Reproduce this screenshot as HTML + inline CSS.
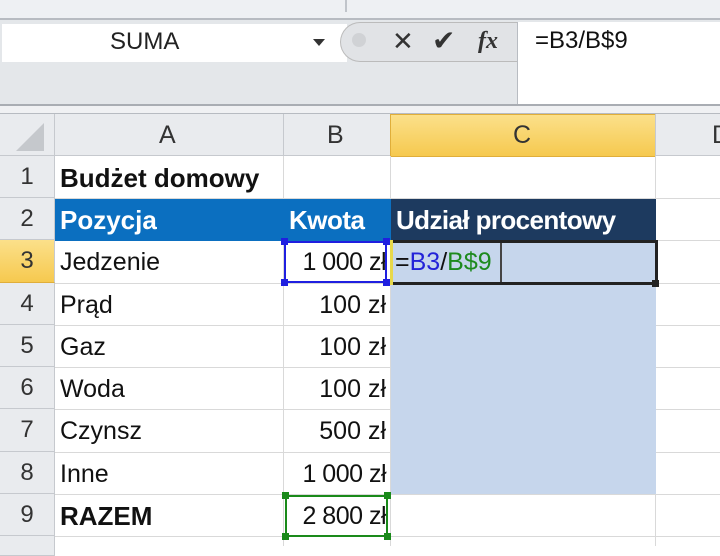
<!DOCTYPE html>
<html><head><meta charset="utf-8"><style>
body{margin:0;width:720px;height:546px;overflow:hidden;background:#fff;font-family:"Liberation Sans",sans-serif;position:relative}
div{position:absolute;box-sizing:border-box}
.t{font-size:25px;line-height:42px;white-space:nowrap}
.rh{left:0;width:55px;background:#e9ebee;border-right:1px solid #c6c9ce;border-bottom:1px solid #c6c9ce;text-align:center;color:#333;font-size:24px;line-height:42px}
.hl{height:1px;background:#d9d9d9;left:55px;width:665px}
.vl{width:1px;background:#d9d9d9;top:156px;height:390px}
</style></head><body>
<div style="left:0;top:0;width:720px;height:20px;background:#eef0f3;border-bottom:2px solid #b7bbc1"></div>
<div style="left:345px;top:0;width:2px;height:12px;background:#c0c4ca"></div>
<div style="left:0;top:20px;width:720px;height:92px;background:#e4e7ea"></div>
<div style="left:2px;top:24px;width:345px;height:38px;background:#fff"></div>
<div class="t" style="left:110px;top:22px;font-size:24px;line-height:40px;color:#222">SUMA</div>
<div style="left:313px;top:39px;width:0;height:0;border-left:6px solid transparent;border-right:6px solid transparent;border-top:7px solid #333"></div>
<div style="left:340px;top:22px;width:180px;height:40px;background:#e1e3e6;border:1px solid #bbb;border-radius:20px 0 0 20px;border-right:none"></div>
<div style="left:352px;top:33px;width:14px;height:14px;border-radius:7px;background:#d0d2d5"></div>
<div class="t" style="left:392px;top:20px;font-size:26px;line-height:42px;color:#333">✕</div>
<div class="t" style="left:432px;top:20px;font-size:28px;line-height:42px;color:#333">✔</div>
<div class="t" style="left:478px;top:20px;font-family:'Liberation Serif',serif;font-style:italic;font-weight:bold;font-size:24px;line-height:42px;color:#333">fx</div>
<div style="left:517px;top:22px;width:203px;height:82px;background:#fff;border-left:1px solid #b8bcc2"></div>
<div class="t" style="left:535px;top:21px;font-size:24px;line-height:40px;color:#111">=B3/B$9</div>
<div style="left:0;top:104px;width:720px;height:10px;background:#f0f1f3;border-top:2px solid #a9adb3;border-bottom:1px solid #b7bbc1"></div>
<div style="left:0;top:114px;width:720px;height:42px;background:#e9ebee;border-bottom:1px solid #c6c9ce"></div>
<div style="left:16px;top:123px;width:0;height:0;border-left:28px solid transparent;border-bottom:28px solid #c5c8cc"></div>
<div style="left:54px;top:114px;width:1px;height:42px;background:#c6c9ce"></div>
<div style="left:283px;top:114px;width:1px;height:42px;background:#c6c9ce"></div>
<div style="left:390px;top:114px;width:266px;height:43px;background:linear-gradient(#fbe08a,#f6c94f);border:1px solid #e0ae3a"></div>
<div style="left:655px;top:114px;width:1px;height:42px;background:#c6c9ce"></div>
<div class="t" style="left:159px;top:114px;color:#333">A</div>
<div class="t" style="left:327px;top:114px;color:#333">B</div>
<div class="t" style="left:513px;top:114px;color:#333">C</div>
<div class="t" style="left:712px;top:114px;color:#333">D</div>
<div class="rh" style="top:156px;height:42px">1</div>
<div class="rh" style="top:198px;height:42px">2</div>
<div class="rh" style="top:240px;height:43px;background:linear-gradient(#fbe08a,#f6c94f);border-bottom:1px solid #e0ae3a">3</div>
<div class="rh" style="top:283px;height:42px">4</div>
<div class="rh" style="top:325px;height:42px">5</div>
<div class="rh" style="top:367px;height:42px">6</div>
<div class="rh" style="top:409px;height:43px">7</div>
<div class="rh" style="top:452px;height:42px">8</div>
<div class="rh" style="top:494px;height:42px">9</div>
<div class="rh" style="top:536px;height:20px"></div>
<div class="hl" style="top:198px"></div><div class="hl" style="top:240px"></div><div class="hl" style="top:283px"></div><div class="hl" style="top:325px"></div><div class="hl" style="top:367px"></div><div class="hl" style="top:409px"></div><div class="hl" style="top:452px"></div><div class="hl" style="top:494px"></div><div class="hl" style="top:536px"></div>
<div class="vl" style="left:283px"></div><div class="vl" style="left:390px"></div><div class="vl" style="left:655px"></div>
<div style="left:391px;top:241px;width:265px;height:253px;background:#c6d6ec"></div>
<div style="left:55px;top:199px;width:336px;height:42px;background:#0b6fc0"></div>
<div style="left:391px;top:199px;width:265px;height:42px;background:#1d3a5f"></div>
<div class="t" style="left:60px;top:157px;font-weight:bold;color:#111;font-size:26px">Budżet domowy</div>
<div class="t" style="left:60px;top:199px;font-weight:bold;color:#fff;font-size:26px">Pozycja</div>
<div class="t" style="left:289px;top:199px;font-weight:bold;color:#fff;font-size:26px;letter-spacing:-0.5px">Kwota</div>
<div class="t" style="left:396px;top:199px;font-weight:bold;color:#fff;font-size:26px;letter-spacing:-0.6px">Udział procentowy</div>
<div class="t" style="left:60px;top:241px;color:#111">Jedzenie</div>
<div class="t" style="left:60px;top:284px;color:#111">Prąd</div>
<div class="t" style="left:60px;top:326px;color:#111">Gaz</div>
<div class="t" style="left:60px;top:368px;color:#111">Woda</div>
<div class="t" style="left:60px;top:410px;color:#111">Czynsz</div>
<div class="t" style="left:60px;top:453px;color:#111">Inne</div>
<div class="t" style="left:60px;top:495px;font-weight:bold;color:#111;font-size:26px">RAZEM</div>
<div class="t" style="left:284px;width:102px;text-align:right;top:241px;color:#111;letter-spacing:-0.5px">1 000 zł</div>
<div class="t" style="left:284px;width:102px;text-align:right;top:284px;color:#111">100 zł</div>
<div class="t" style="left:284px;width:102px;text-align:right;top:326px;color:#111">100 zł</div>
<div class="t" style="left:284px;width:102px;text-align:right;top:368px;color:#111">100 zł</div>
<div class="t" style="left:284px;width:102px;text-align:right;top:410px;color:#111">500 zł</div>
<div class="t" style="left:284px;width:102px;text-align:right;top:453px;color:#111;letter-spacing:-0.5px">1 000 zł</div>
<div class="t" style="left:284px;width:102px;text-align:right;top:495px;color:#111;letter-spacing:-0.5px">2 800 zł</div>
<div style="left:284px;top:241px;width:103px;height:42px;border:2px solid #1f1fe0"></div>
<div style="left:281px;top:238px;width:7px;height:7px;background:#1f1fe0"></div>
<div style="left:383px;top:238px;width:7px;height:7px;background:#1f1fe0"></div>
<div style="left:281px;top:279px;width:7px;height:7px;background:#1f1fe0"></div>
<div style="left:383px;top:279px;width:7px;height:7px;background:#1f1fe0"></div>
<div style="left:285px;top:495px;width:103px;height:42px;border:2px solid #1a8a1a"></div>
<div style="left:282px;top:492px;width:7px;height:7px;background:#1a8a1a"></div>
<div style="left:384px;top:492px;width:7px;height:7px;background:#1a8a1a"></div>
<div style="left:282px;top:533px;width:7px;height:7px;background:#1a8a1a"></div>
<div style="left:384px;top:533px;width:7px;height:7px;background:#1a8a1a"></div>
<div style="left:390px;top:240px;width:268px;height:45px;border:3px solid #222"></div>
<div style="left:393px;top:243px;width:109px;height:39px;background:#c6d6ec;border-right:2px solid #444"></div>
<div style="left:390px;top:240px;width:3px;height:45px;background:#e8d84a"></div>
<div style="left:652px;top:280px;width:7px;height:7px;background:#222"></div>
<div class="t" style="left:395px;top:241px;color:#111">=<span style="color:#2323d8">B3</span>/<span style="color:#1e8a1e">B$9</span></div>
</body></html>
